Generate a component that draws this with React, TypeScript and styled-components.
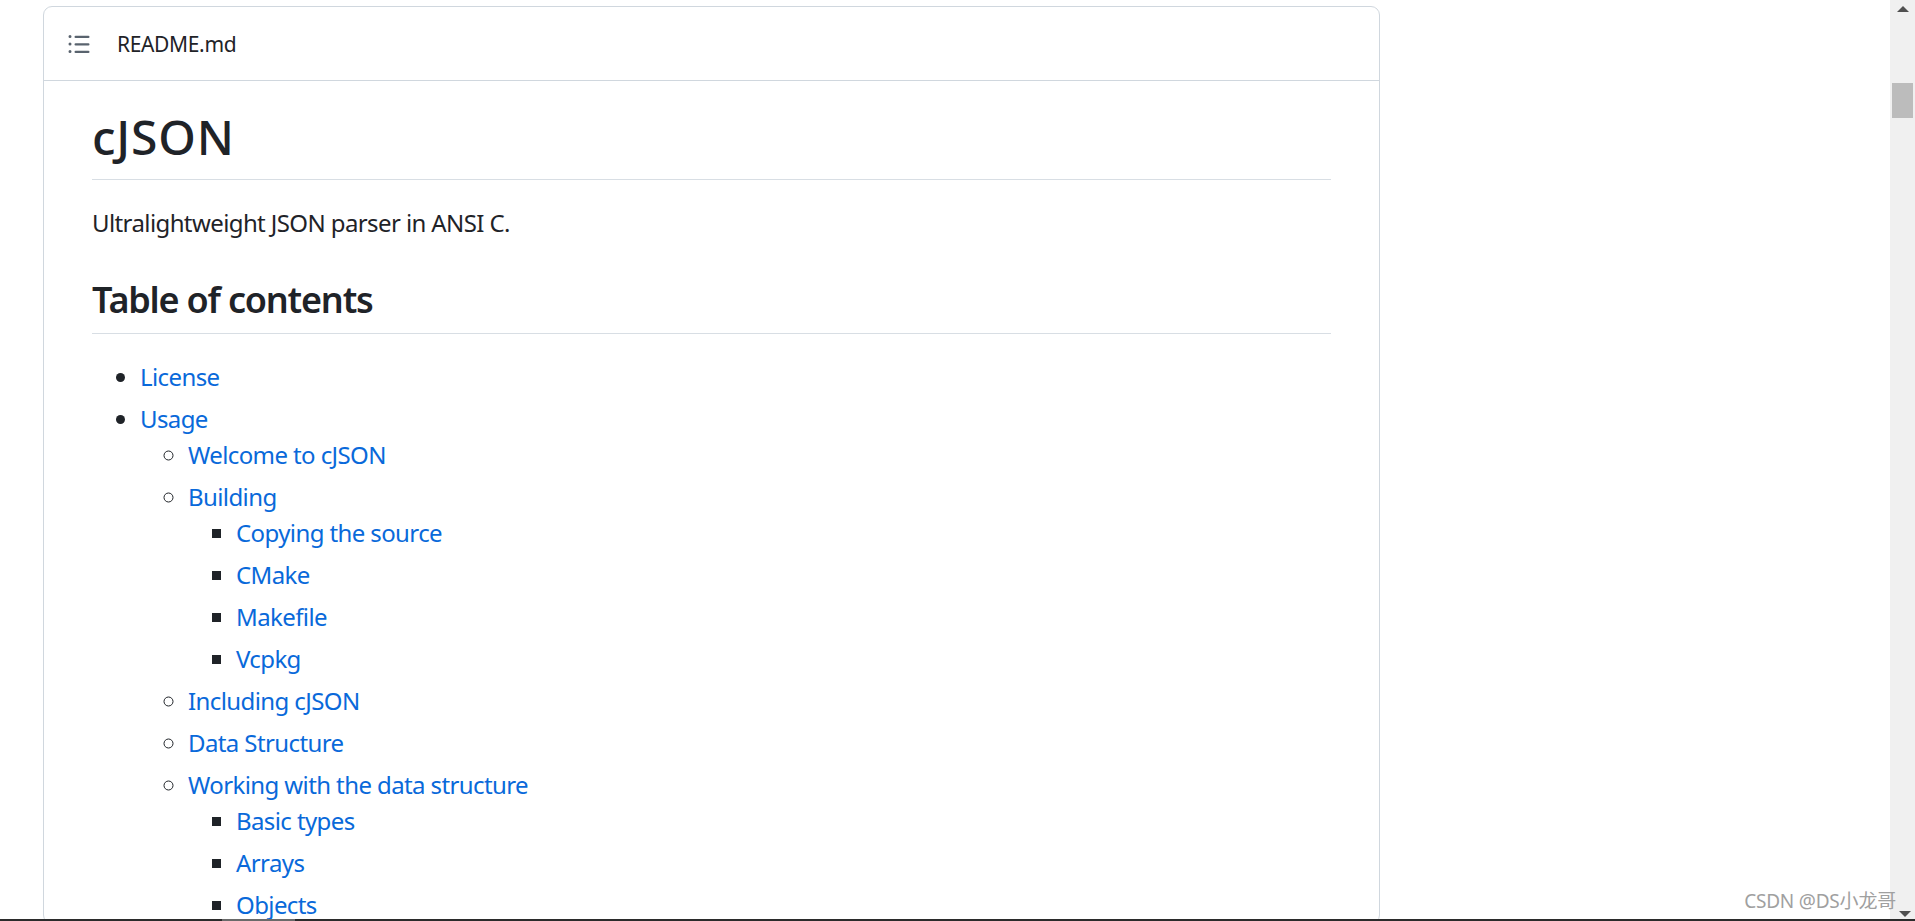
import styled, { createGlobalStyle } from 'styled-components';

const GlobalStyle = createGlobalStyle`
  html, body {
    margin: 0;
    padding: 0;
    overflow: hidden;
    background: #ffffff;
  }
`;

const Screen = styled.div`
  position: relative;
  width: 1915px;
  height: 921px;
  overflow: hidden;
  display: flex;
  font-family: "Noto Sans", "Open Sans", sans-serif;
  color: #1f2328;
`;

const Page = styled.main`
  flex: 1;
  padding: 6px 0 0 43px;
  overflow: hidden;
`;

const Card = styled.section`
  width: 1337px;
  box-sizing: border-box;
  border: 1px solid #d0d7de;
  border-radius: 9px;
`;

const CardHeader = styled.header`
  height: 73px;
  border-bottom: 1px solid #d0d7de;
  display: flex;
  align-items: center;
  padding-left: 23px;
  gap: 26px;
`;

const IconButton = styled.span`
  display: flex;
  width: 24px;
  height: 24px;
  color: #59636e;
`;

const FileName = styled.h2`
  margin: 0;
  font-size: 21px;
  font-weight: 400;
  letter-spacing: -0.35px;
  color: #1f2328;
`;

const Markdown = styled.article`
  padding: 26px 48px 0;
  font-size: 24px;
  line-height: 1.5;
  letter-spacing: -0.6px;
`;

const Title = styled.h1`
  margin: 0 0 25px;
  padding-bottom: 12px;
  font-size: 48px;
  line-height: 1.25;
  font-weight: 500;
  letter-spacing: 0.8px;
  border-bottom: 1px solid #d8dee4;
`;

const Paragraph = styled.p`
  margin: 0 0 24px;
`;

const Heading = styled.h2`
  margin: 36px 0 25px;
  padding-bottom: 11px;
  font-size: 36px;
  line-height: 1.25;
  font-weight: 600;
  letter-spacing: -1.2px;
  border-bottom: 1px solid #d8dee4;
`;

const List = styled.ul<{ $kind: 'disc' | 'circle' | 'square' }>`
  margin: 0;
  padding-left: 48px;
  list-style: ${(p) => p.$kind};
`;

const Item = styled.li<{ $first?: boolean }>`
  margin-top: ${(p) => (p.$first ? '0' : '6px')};
`;

const Anchor = styled.a`
  color: #0969da;
  text-decoration: none;
`;

const ScrollTrack = styled.div`
  width: 25px;
  background: #f0f0f0;
  display: flex;
  flex-direction: column;
  align-items: center;
  padding-top: 6px;
  box-sizing: border-box;
`;

const Arrow = styled.div<{ $down?: boolean }>`
  width: 0;
  height: 0;
  border-left: 6px solid transparent;
  border-right: 6px solid transparent;
  ${(p) =>
    p.$down ? 'border-top: 6px solid #505050;' : 'border-bottom: 6px solid #505050;'}
`;

const Thumb = styled.div`
  width: 21px;
  height: 35px;
  margin-top: 71px;
  background: #bcbcbc;
`;

const DownArrow = styled.div`
  position: absolute;
  right: 4px;
  bottom: 4px;
`;

const BottomBar = styled.div`
  position: absolute;
  left: 0;
  right: 0;
  bottom: 0;
  height: 2px;
  background: #2b2b2b;
`;

const BottomThumb = styled.div`
  margin-left: 222px;
  width: 73px;
  height: 2px;
  background: #6a6a6a;
`;

const Watermark = styled.div`
  position: absolute;
  right: 19px;
  bottom: 7px;
  font-family: "Noto Sans", "Noto Sans CJK SC", sans-serif;
  font-size: 19px;
  letter-spacing: -0.2px;
  color: #a0a0a0;
`;

const ListIcon = () => (
  <svg width="24" height="24" viewBox="0 0 16 16" fill="currentColor">
    <path d="M5.75 2.5h8.5a.75.75 0 0 1 0 1.5h-8.5a.75.75 0 0 1 0-1.5Zm0 5h8.5a.75.75 0 0 1 0 1.5h-8.5a.75.75 0 0 1 0-1.5Zm0 5h8.5a.75.75 0 0 1 0 1.5h-8.5a.75.75 0 0 1 0-1.5ZM2 14a1 1 0 1 1 0-2 1 1 0 0 1 0 2Zm1-6a1 1 0 1 1-2 0 1 1 0 0 1 2 0ZM2 4a1 1 0 1 1 0-2 1 1 0 0 1 0 2Z" />
  </svg>
);

type Entry = { label: string; children?: Entry[] };

const toc: Entry[] = [
  { label: 'License' },
  {
    label: 'Usage',
    children: [
      { label: 'Welcome to cJSON' },
      {
        label: 'Building',
        children: [
          { label: 'Copying the source' },
          { label: 'CMake' },
          { label: 'Makefile' },
          { label: 'Vcpkg' },
        ],
      },
      { label: 'Including cJSON' },
      { label: 'Data Structure' },
      {
        label: 'Working with the data structure',
        children: [
          { label: 'Basic types' },
          { label: 'Arrays' },
          { label: 'Objects' },
        ],
      },
    ],
  },
];

const kinds = ['disc', 'circle', 'square'] as const;

const Toc = ({ entries, depth }: { entries: Entry[]; depth: number }) => (
  <List $kind={kinds[Math.min(depth, 2)]}>
    {entries.map((e, i) => (
      <Item key={e.label} $first={i === 0}>
        <Anchor href="#">{e.label}</Anchor>
        {e.children && <Toc entries={e.children} depth={depth + 1} />}
      </Item>
    ))}
  </List>
);

const App = () => {
  return (
    <Screen>
      <GlobalStyle />
      <Page>
        <Card>
          <CardHeader>
            <IconButton>
              <ListIcon />
            </IconButton>
            <FileName>README.md</FileName>
          </CardHeader>
          <Markdown>
            <Title>cJSON</Title>
            <Paragraph>Ultralightweight JSON parser in ANSI C.</Paragraph>
            <Heading>Table of contents</Heading>
            <Toc entries={toc} depth={0} />
          </Markdown>
        </Card>
      </Page>
      <ScrollTrack>
        <Arrow />
        <Thumb />
      </ScrollTrack>
      <DownArrow>
        <Arrow $down />
      </DownArrow>
      <BottomBar>
        <BottomThumb />
      </BottomBar>
      <Watermark>CSDN @DS小龙哥</Watermark>
    </Screen>
  );
};

export default App;
